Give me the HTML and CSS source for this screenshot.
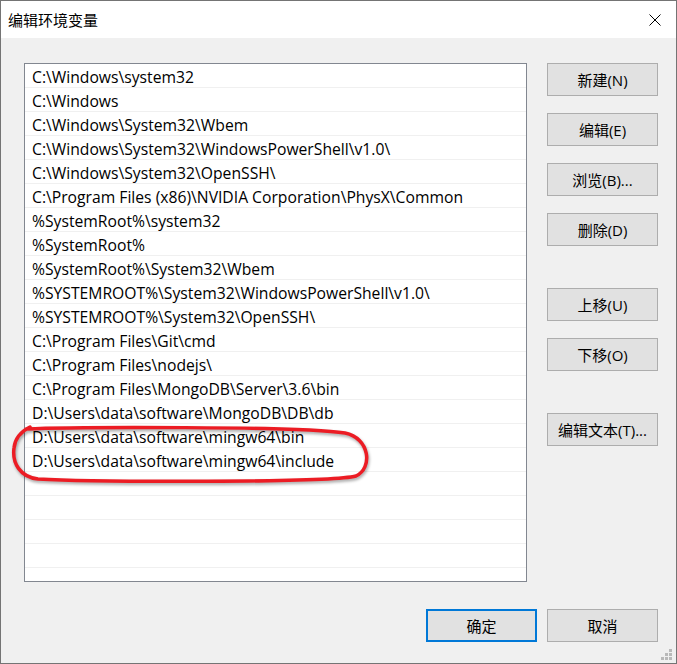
FILE: index.html
```html
<!DOCTYPE html>
<html lang="zh-CN">
<head>
    <meta charset="UTF-8">
    <title>编辑环境变量</title>
    <link rel="stylesheet" href="styles.css">
</head>
<body>
    <div class="window">
        <header class="titlebar">
            <span class="title">编辑环境变量</span>
            <svg class="close" width="12" height="12" viewBox="0 0 12 12">
                <path d="M0.5 0.5 L11.5 11.5 M11.5 0.5 L0.5 11.5" stroke="#000" stroke-width="1" fill="none"/>
            </svg>
        </header>

        <main class="content">
            <div class="main-row">
                <ul class="path-list">
                    <li>C:\Windows\system32</li>
                    <li>C:\Windows</li>
                    <li>C:\Windows\System32\Wbem</li>
                    <li>C:\Windows\System32\WindowsPowerShell\v1.0\</li>
                    <li>C:\Windows\System32\OpenSSH\</li>
                    <li>C:\Program Files (x86)\NVIDIA Corporation\PhysX\Common</li>
                    <li>%SystemRoot%\system32</li>
                    <li>%SystemRoot%</li>
                    <li>%SystemRoot%\System32\Wbem</li>
                    <li>%SYSTEMROOT%\System32\WindowsPowerShell\v1.0\</li>
                    <li>%SYSTEMROOT%\System32\OpenSSH\</li>
                    <li>C:\Program Files\Git\cmd</li>
                    <li>C:\Program Files\nodejs\</li>
                    <li>C:\Program Files\MongoDB\Server\3.6\bin</li>
                    <li>D:\Users\data\software\MongoDB\DB\db</li>
                    <li>D:\Users\data\software\mingw64\bin</li>
                    <li>D:\Users\data\software\mingw64\include</li>
                    <li></li>
                    <li></li>
                    <li></li>
                    <li></li>
                    <li></li>
                </ul>

                <div class="side-buttons">
                    <div class="btn-group">
                        <button class="btn">新建(N)</button>
                        <button class="btn">编辑(E)</button>
                        <button class="btn">浏览(B)...</button>
                        <button class="btn">删除(D)</button>
                    </div>
                    <div class="btn-group">
                        <button class="btn">上移(U)</button>
                        <button class="btn">下移(O)</button>
                    </div>
                    <div class="btn-group">
                        <button class="btn">编辑文本(T)...</button>
                    </div>
                </div>
            </div>

            <footer class="dialog-buttons">
                <button class="btn btn-default">确定</button>
                <button class="btn">取消</button>
            </footer>

            <svg class="grip" width="12" height="12" viewBox="0 0 12 12">
                <rect x="8" y="0" width="3" height="3" fill="#b9b9b9"/>
                <rect x="4" y="4" width="3" height="3" fill="#b9b9b9"/>
                <rect x="8" y="4" width="3" height="3" fill="#b9b9b9"/>
                <rect x="0" y="8" width="3" height="3" fill="#b9b9b9"/>
                <rect x="4" y="8" width="3" height="3" fill="#b9b9b9"/>
                <rect x="8" y="8" width="3" height="3" fill="#b9b9b9"/>
            </svg>
        </main>

        <!-- red marker drawn around the two mingw64 entries -->
        <svg class="marker" width="677" height="664" viewBox="0 0 677 664">
            <path d="M26 429 C70 427 300 426 345 433 C370 438 373 468 356 476 C330 483 90 482 38 479 C20 477 12 463 14 448 C15 438 20 432 30 427"
                  fill="none" stroke="#ec1c24" stroke-width="3.5" stroke-linecap="round"/>
        </svg>
    </div>
</body>
</html>
```

FILE: styles.css
```css
* {
    box-sizing: border-box;
}
body {
    margin: 0;
    font-family: "Open Sans", "Noto Sans CJK SC", sans-serif;
    font-size: 15px;
    color: #000;
}
.window {
    position: relative;
    width: 677px;
    height: 664px;
    border: 1px solid #747474;
    background: #f0f0f0;
    display: flex;
    flex-direction: column;
}
.titlebar {
    height: 37px;
    background: #fff;
    display: flex;
    align-items: center;
    justify-content: space-between;
    padding: 0 15px 0 7px;
}
.title {
    font-family: "Noto Sans CJK SC", sans-serif;
    font-size: 15px;
}
.content {
    position: relative;
    flex: 1;
    padding: 25px 18px 0 23px;
}
.main-row {
    display: flex;
    gap: 20px;
}
.path-list {
    list-style: none;
    margin: 0;
    padding: 0;
    width: 503px;
    height: 519px;
    overflow: hidden;
    background: #fff;
    border: 1px solid #828790;
}
.path-list li {
    height: 24px;
    padding: 3px 0 0 7px;
    line-height: 21px;
    border-bottom: 1px solid #f0f0f0;
    white-space: nowrap;
    font-size: 15.7px;
}
.side-buttons {
    display: flex;
    flex-direction: column;
    gap: 42px;
}
.btn-group {
    display: flex;
    flex-direction: column;
    gap: 17px;
}
.btn {
    width: 111px;
    height: 33px;
    padding: 0;
    background: #e1e1e1;
    border: 1px solid #adadad;
    font-family: "Open Sans", "Noto Sans CJK SC", sans-serif;
    font-size: 15px;
    color: #000;
}
.dialog-buttons {
    display: flex;
    justify-content: flex-end;
    gap: 10px;
    margin-top: 27px;
}
.btn-default {
    border: 2px solid #0078d7;
}
.grip {
    position: absolute;
    right: 3px;
    bottom: 2px;
}
.marker {
    position: absolute;
    left: -1px;
    top: -1px;
    pointer-events: none;
    filter: drop-shadow(1px 2px 1.5px rgba(0, 0, 0, 0.35));
}
```
